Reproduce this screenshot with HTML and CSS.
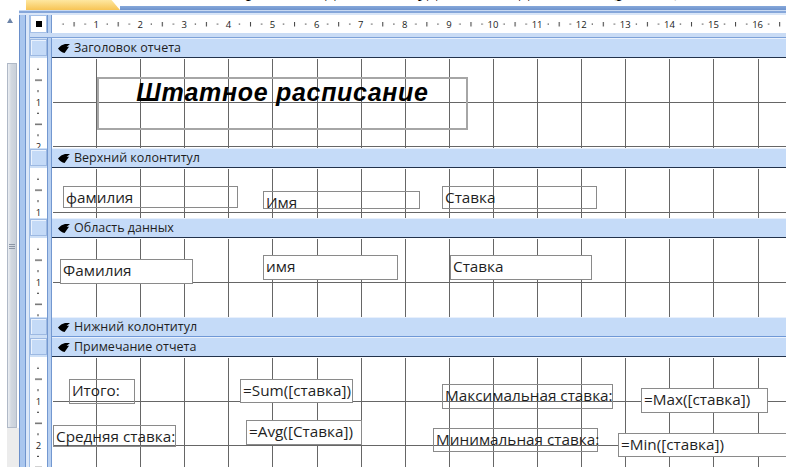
FILE: index.html
```html
<!DOCTYPE html>
<html lang="ru">
<head>
<meta charset="utf-8">
<title>Штатное расписание — конструктор отчета</title>
<link rel="stylesheet" href="styles.css">
</head>
<body>
<svg class="defs" width="0" height="0" aria-hidden="true">
  <defs>
    <pattern id="hticks" width="44.1" height="18" patternUnits="userSpaceOnUse">
      <rect x="10.5" y="8.5" width="1.2" height="1.2" fill="#3a3a3a"/>
      <rect x="21.6" y="7" width="1" height="4.5" fill="#3a3a3a"/>
      <rect x="32.6" y="8.5" width="1.2" height="1.2" fill="#3a3a3a"/>
    </pattern>
    <pattern id="vticks" width="17" height="44.1" patternUnits="userSpaceOnUse">
      <rect x="7" y="10.6" width="2" height="1.1" fill="#3a3a3a"/>
      <rect x="5" y="21.6" width="7" height="1.1" fill="#3a3a3a"/>
      <rect x="7" y="32.6" width="2" height="1.1" fill="#3a3a3a"/>
    </pattern>
  </defs>
</svg>

<div class="top">
  <div class="top-pad"></div>
  <div class="doc-tab"></div>
  <div class="top-rest">
    <div class="caption"><span>Отчёт в режиме дизайна будет выглядеть так (рис. 9)</span></div>
    <div class="tab-strip"></div>
  </div>
</div>

<div class="workspace">
  <aside class="nav">
    <span class="nav-arrow"></span>
    <div class="nav-scroll"><span class="grip"></span></div>
    <div class="nav-foot"></div>
  </aside>

  <div class="designer">
    <div class="ruler-row">
      <div class="corner"><span class="corner-mark"></span></div>
      <div class="sep"></div>
      <div class="hruler">
        <svg width="734" height="18">
          <rect width="734" height="18" fill="url(#hticks)"/>
          <g class="rnum">
            <text x="44.1" y="12.6">1</text>
            <text x="88.2" y="12.6">2</text>
            <text x="132.3" y="12.6">3</text>
            <text x="176.4" y="12.6">4</text>
            <text x="220.5" y="12.6">5</text>
            <text x="264.6" y="12.6">6</text>
            <text x="308.7" y="12.6">7</text>
            <text x="352.8" y="12.6">8</text>
            <text x="396.9" y="12.6">9</text>
            <text x="441" y="12.6">10</text>
            <text x="485.1" y="12.6">11</text>
            <text x="529.2" y="12.6">12</text>
            <text x="573.3" y="12.6">13</text>
            <text x="617.4" y="12.6">14</text>
            <text x="661.5" y="12.6">15</text>
            <text x="705.6" y="12.6">16</text>
          </g>
        </svg>
      </div>
    </div>
    <div class="ruler-gap"></div>

    <!-- Заголовок отчета -->
    <div class="band-row">
      <div class="selector"></div><div class="sep"></div>
      <div class="band">
        <svg class="band-icon" viewBox="0 0 12 9" width="12" height="9"><path d="M0 4.5C2 2.2 4.2.6 7 0H12L8.6 2.8H11L6.6 9C4 8.6 1.8 7 0 4.5Z"/></svg>
        Заголовок отчета
      </div>
    </div>
    <div class="body-row h-report">
      <div class="vruler">
        <svg width="17" height="90">
          <rect width="17" height="90" fill="url(#vticks)"/>
          <g class="rnum"><text x="8.5" y="47.5">1</text><text x="8.5" y="91.6">2</text></g>
        </svg>
      </div>
      <div class="sep"></div>
      <div class="canvas">
        <div class="ctl title">Штатное расписание</div>
      </div>
    </div>

    <!-- Верхний колонтитул -->
    <div class="band-row">
      <div class="selector"></div><div class="sep"></div>
      <div class="band">
        <svg class="band-icon" viewBox="0 0 12 9" width="12" height="9"><path d="M0 4.5C2 2.2 4.2.6 7 0H12L8.6 2.8H11L6.6 9C4 8.6 1.8 7 0 4.5Z"/></svg>
        Верхний колонтитул
      </div>
    </div>
    <div class="body-row h-page">
      <div class="vruler">
        <svg width="17" height="50">
          <rect width="17" height="50" fill="url(#vticks)"/>
          <g class="rnum"><text x="8.5" y="47.5">1</text></g>
        </svg>
      </div>
      <div class="sep"></div>
      <div class="canvas">
        <div class="ctl lbl-familia">фамилия</div>
        <div class="ctl lbl-imya">Имя</div>
        <div class="ctl lbl-stavka">Ставка</div>
      </div>
    </div>

    <!-- Область данных -->
    <div class="band-row">
      <div class="selector"></div><div class="sep"></div>
      <div class="band">
        <svg class="band-icon" viewBox="0 0 12 9" width="12" height="9"><path d="M0 4.5C2 2.2 4.2.6 7 0H12L8.6 2.8H11L6.6 9C4 8.6 1.8 7 0 4.5Z"/></svg>
        Область данных
      </div>
    </div>
    <div class="body-row h-detail">
      <div class="vruler">
        <svg width="17" height="79">
          <rect width="17" height="79" fill="url(#vticks)"/>
          <g class="rnum"><text x="8.5" y="47.5">1</text></g>
        </svg>
      </div>
      <div class="sep"></div>
      <div class="canvas">
        <div class="ctl field fld-familia">Фамилия</div>
        <div class="ctl field fld-imya">имя</div>
        <div class="ctl field fld-stavka">Ставка</div>
      </div>
    </div>

    <!-- Нижний колонтитул -->
    <div class="band-row">
      <div class="selector"></div><div class="sep"></div>
      <div class="band band-empty">
        <svg class="band-icon" viewBox="0 0 12 9" width="12" height="9"><path d="M0 4.5C2 2.2 4.2.6 7 0H12L8.6 2.8H11L6.6 9C4 8.6 1.8 7 0 4.5Z"/></svg>
        Нижний колонтитул
      </div>
    </div>

    <!-- Примечание отчета -->
    <div class="band-row">
      <div class="selector"></div><div class="sep"></div>
      <div class="band">
        <svg class="band-icon" viewBox="0 0 12 9" width="12" height="9"><path d="M0 4.5C2 2.2 4.2.6 7 0H12L8.6 2.8H11L6.6 9C4 8.6 1.8 7 0 4.5Z"/></svg>
        Примечание отчета
      </div>
    </div>
    <div class="body-row h-footer">
      <div class="vruler">
        <svg width="17" height="110">
          <rect width="17" height="110" fill="url(#vticks)"/>
          <g class="rnum"><text x="8.5" y="47.5">1</text><text x="8.5" y="91.6">2</text></g>
        </svg>
      </div>
      <div class="sep"></div>
      <div class="canvas">
        <div class="ctl lbl-itogo">Итого:</div>
        <div class="ctl lbl-avg">Средняя ставка:</div>
        <div class="ctl field fld-sum">=Sum([ставка])</div>
        <div class="ctl field fld-avg">=Avg([Ставка])</div>
        <div class="ctl lbl-max">Максимальная ставка:</div>
        <div class="ctl field fld-max">=Max([ставка])</div>
        <div class="ctl lbl-min">Минимальная ставка:</div>
        <div class="ctl field fld-min">=Min([ставка])</div>
      </div>
    </div>
  </div>
</div>
</body>
</html>
```

FILE: styles.css
```css
* { box-sizing: border-box; }

html, body { margin: 0; padding: 0; }

body {
  width: 786px;
  height: 467px;
  overflow: hidden;
  background: #fff;
  font-family: "Open Sans", "Noto Sans", sans-serif;
  color: #1c1c1c;
}

.defs { position: absolute; width: 0; height: 0; }

/* ---------- document tab strip ---------- */
.top { display: flex; height: 10px; }
.top-pad { width: 26px; }
.doc-tab {
  width: 94px;
  background: linear-gradient(#fee7a0, #f7c455);
  clip-path: polygon(0 0, 91% 0, 100% 100%, 0 100%);
}
.top-rest { flex: 1; display: flex; flex-direction: column; }
.caption {
  flex: none;
  height: 6px;
  overflow: hidden;
  font: 21px/23px "Liberation Serif", "Times New Roman", serif;
  color: #000;
  white-space: nowrap;
}
/* only the descenders of the line above the window stay in view */
.caption span { display: block; margin-top: -22px; padding-left: 40px; word-spacing: 6px; }
.tab-strip { flex: 1; background: linear-gradient(#86a8da, #6e93cd); }

/* ---------- workspace ---------- */
.workspace { display: flex; height: 457px; overflow: hidden; }

.nav {
  width: 19px;
  flex: none;
  display: flex;
  flex-direction: column;
  align-items: flex-start;
  padding-left: 7px;
}
.nav-arrow {
  flex: none;
  margin-top: 8px;
  width: 0; height: 0;
  border-left: 3px solid transparent;
  border-right: 3px solid transparent;
  border-bottom: 5px solid #6d84a8;
}
.nav-scroll {
  flex: none;
  margin-top: 40px;
  width: 10px;
  height: 365px;
  background: linear-gradient(to right, #eceff3, #d2d8e0 40%, #c9d0da);
  border: 1px solid #b0b9c7;
  display: flex;
  justify-content: center;
  padding-top: 180px;
}
.grip {
  width: 6px;
  height: 6px;
  background: repeating-linear-gradient(#8b95a5 0 1px, transparent 1px 2px);
}
.nav-foot { flex: 1; width: 12px; background: #ececec; }

/* ---------- designer frame ---------- */
.designer {
  flex: 1;
  min-width: 0;
  display: flex;
  flex-direction: column;
  padding: 5px 0 0 11px;
  background:
    linear-gradient(#c8d9f2 0 1px, #86a7da 1px 3px, #d9e6f8 3px 5px) top left / 100% 5px no-repeat,
    linear-gradient(to right, #6a8fca 0 1px, #a9c6ee 1px 6px, #6f94cd 6px 7px, #dbe7f8 7px 10px, #9fbde6 10px 11px) left top / 11px 100% no-repeat,
    #cddff6;
}
.designer > * { flex: none; }

.sep {
  width: 5px;
  flex: none;
  background: linear-gradient(to right, #7398d0 0 1px, #b8d0f1 1px 4px, #7398d0 4px 5px);
}

.ruler-row { display: flex; height: 18px; }
.corner {
  width: 17px;
  flex: none;
  background: #fff;
  border: 1px solid #a5c0e7;
  display: flex;
  align-items: center;
  justify-content: center;
}
.corner-mark { width: 6px; height: 6px; background: #000; }
.hruler { flex: 1; min-width: 0; background: #fff; overflow: hidden; }
.hruler svg { display: block; }

.rnum text {
  font-family: "Open Sans", "Noto Sans", sans-serif;
  font-size: 9.5px;
  fill: #1a1a1a;
  text-anchor: middle;
}

.ruler-gap { height: 5px; background: #cadcf5; border-bottom: 1px solid #7ea2d8; }

/* ---------- section bars ---------- */
.band-row { display: flex; height: 20px; }
.selector {
  width: 17px;
  flex: none;
  margin: 1px 0 2px;
  background: #c4daf7;
  border: 1px solid #9db9e2;
  box-shadow: inset 1px 1px #eaf2fd;
}
.band {
  flex: 1;
  min-width: 0;
  display: flex;
  align-items: center;
  gap: 4px;
  padding-left: 6px;
  background: #c5dbf8;
  border-top: 1px solid #e8f0fc;
  border-bottom: 1px solid #22324b;
  font-size: 12.5px;
  line-height: 18px;
  color: #1e1e1e;
  white-space: nowrap;
}
.band-empty { border-bottom-color: #6f98d6; }
.band-icon { fill: #000; flex: none; }

/* ---------- section bodies ---------- */
.body-row { display: flex; }
.h-report { height: 90px; }
.h-page { height: 50px; }
.h-detail { height: 79px; }
.designer > .h-footer { flex: 1 1 0; min-height: 0; }

.vruler { width: 17px; flex: none; background: #fff; overflow: hidden; }
.vruler svg { display: block; }

.canvas {
  flex: 1;
  min-width: 0;
  position: relative;
  overflow: hidden;
  background-color: #fff;
  background-image:
    repeating-linear-gradient(90deg, transparent 0 43.1px, #666 43.1px 44.1px),
    repeating-linear-gradient(180deg, transparent 0 43.1px, #666 43.1px 44.1px);
  background-position: 1px 1px;
  background-repeat: no-repeat;
}

/* ---------- report controls ---------- */
.ctl {
  position: absolute;
  border: 1px solid #8a8a8a;
  padding-left: 2px;
  font-size: 15.3px;
  line-height: 21px;
  color: #1f1f1f;
  white-space: nowrap;
}
.field { background: #fff; }

.title {
  left: 45px; top: 19px; width: 371px; height: 53px;
  border: 2px solid #a6a6a6;
  padding: 0;
  text-align: center;
  font: italic bold 25px/26px "Liberation Sans", Arial, sans-serif;
  letter-spacing: 0.7px;
  color: #000;
}

.lbl-familia { left: 11px; top: 18px; width: 175px; height: 22px; }
.lbl-imya { left: 211px; top: 23px; width: 157px; height: 18px; }
.lbl-stavka { left: 390px; top: 18px; width: 155px; height: 23px; }

.fld-familia { left: 8px; top: 21px; width: 133px; height: 25px; }
.fld-imya { left: 211px; top: 17px; width: 135px; height: 25px; }
.fld-stavka { left: 398px; top: 17px; width: 142px; height: 25px; }

.lbl-itogo { left: 17px; top: 22px; width: 66px; height: 25px; }
.lbl-avg { left: 1px; top: 68px; width: 123px; height: 22px; }
.fld-sum { left: 188px; top: 22px; width: 113px; height: 24px; }
.fld-avg { left: 194px; top: 63px; width: 116px; height: 25px; }
.lbl-max { left: 390px; top: 27px; width: 171px; height: 25px; }
.fld-max { left: 589px; top: 31px; width: 127px; height: 25px; }
.lbl-min { left: 381px; top: 71px; width: 165px; height: 24px; }
.fld-min { left: 566px; top: 76px; width: 180px; height: 24px; }
```
